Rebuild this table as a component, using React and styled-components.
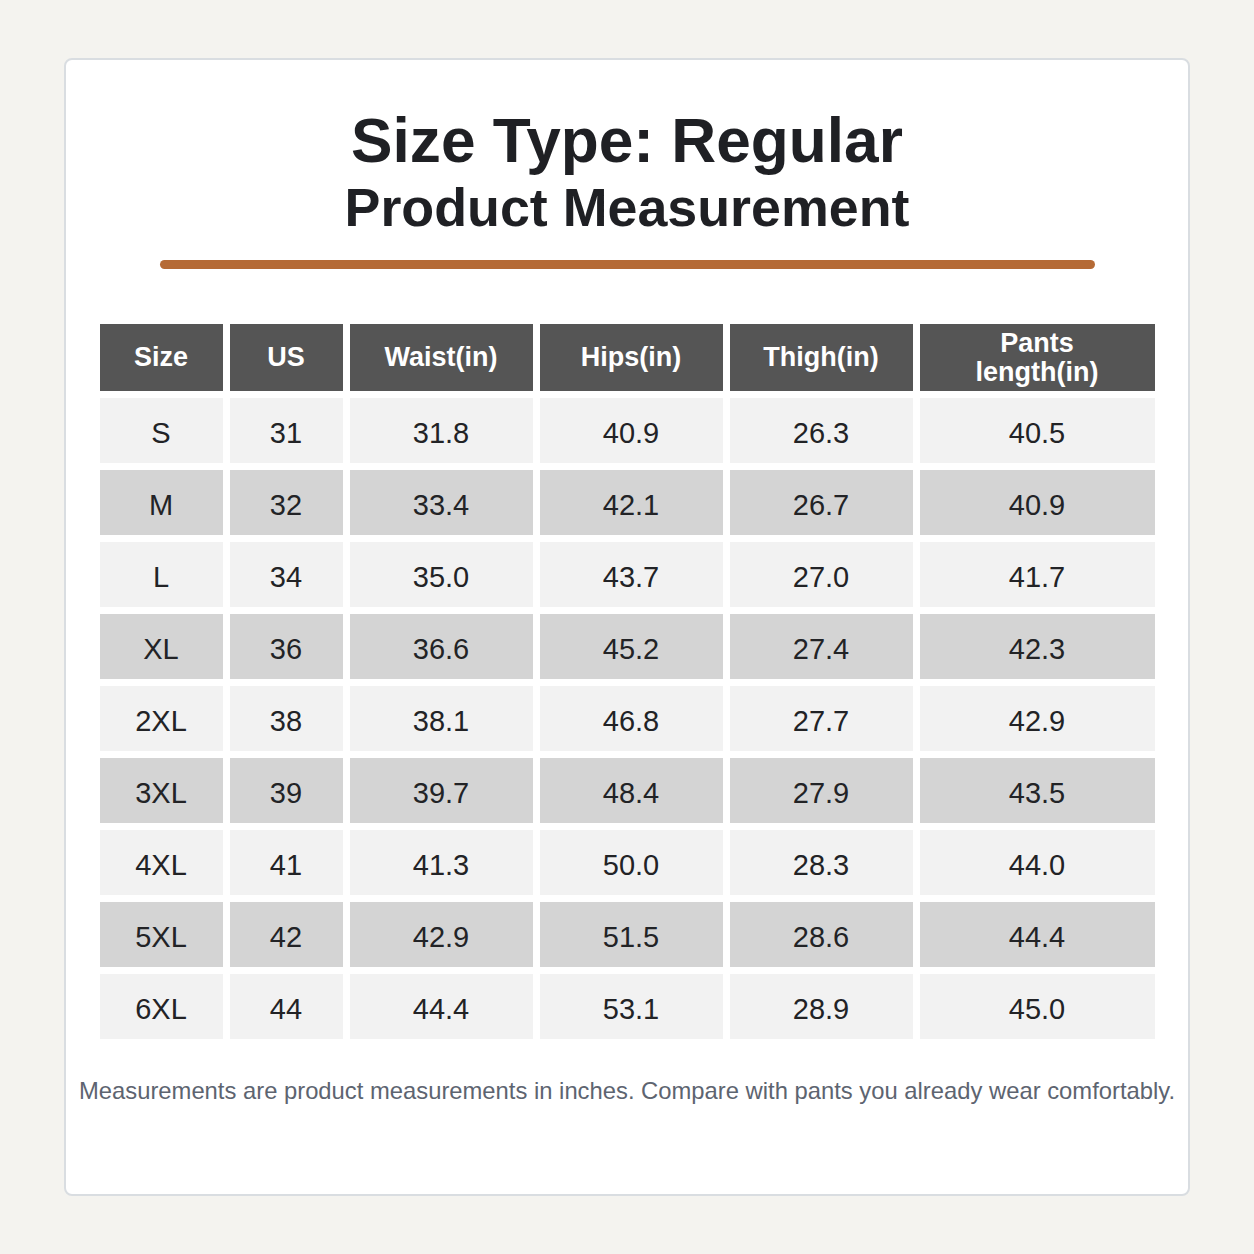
import React from 'react';
import styled, { createGlobalStyle } from 'styled-components';

const GlobalStyle = createGlobalStyle`
  html, body {
    margin: 0;
    padding: 0;
    background: #f4f3ef;
  }
  body {
    font-family: "Liberation Sans", Arial, sans-serif;
  }
`;

const columns = [
  { key: 'size', label: 'Size', width: 123 },
  { key: 'us', label: 'US', width: 113 },
  { key: 'waist', label: 'Waist(in)', width: 183 },
  { key: 'hips', label: 'Hips(in)', width: 183 },
  { key: 'thigh', label: 'Thigh(in)', width: 183 },
  { key: 'length', label: 'Pants length(in)', width: 235 },
];

const rows = [
  ['S', '31', '31.8', '40.9', '26.3', '40.5'],
  ['M', '32', '33.4', '42.1', '26.7', '40.9'],
  ['L', '34', '35.0', '43.7', '27.0', '41.7'],
  ['XL', '36', '36.6', '45.2', '27.4', '42.3'],
  ['2XL', '38', '38.1', '46.8', '27.7', '42.9'],
  ['3XL', '39', '39.7', '48.4', '27.9', '43.5'],
  ['4XL', '41', '41.3', '50.0', '28.3', '44.0'],
  ['5XL', '42', '42.9', '51.5', '28.6', '44.4'],
  ['6XL', '44', '44.4', '53.1', '28.9', '45.0'],
];

export default function App() {
  return (
    <Page>
      <GlobalStyle />
      <Card>
        <Title>
          <TitleLine>Size Type: Regular</TitleLine>
          <SubLine>Product Measurement</SubLine>
        </Title>
        <Divider />
        <Table>
          <colgroup>
            {columns.map(c => <col key={c.key} style={{ width: c.width }} />)}
          </colgroup>
          <thead>
            <tr>
              {columns.map(c => <HeadCell key={c.key}>{c.label}</HeadCell>)}
            </tr>
          </thead>
          <tbody>
            {rows.map((r, i) => (
              <tr key={r[0]}>
                {r.map((v, j) => <Cell key={j} shade={i % 2 === 1}>{v}</Cell>)}
              </tr>
            ))}
          </tbody>
        </Table>
        <Note>
          Measurements are product measurements in inches. Compare with pants you already wear comfortably.
        </Note>
      </Card>
    </Page>
  );
}

const Page = styled.div`
  padding: 58px 64px;
  display: flex;
  justify-content: center;
`;

const Card = styled.div`
  box-sizing: border-box;
  width: 1126px;
  height: 1138px;
  background: #ffffff;
  border: 2px solid #d9dde1;
  border-radius: 8px;
  padding: 47.5px 10px 0;
  display: flex;
  flex-direction: column;
  align-items: center;
`;

const Title = styled.h1`
  margin: 0;
  text-align: center;
  color: #1f2024;
  font-weight: 700;
`;

const TitleLine = styled.div`
  font-size: 62.2px;
  line-height: 66px;
`;

const SubLine = styled.div`
  font-size: 53.8px;
  line-height: 66px;
`;

const Divider = styled.div`
  width: 935px;
  height: 9px;
  margin-top: 20.5px;
  background: #b56a35;
  border-radius: 4.5px;
`;

const Table = styled.table`
  margin-top: 48px;
  border-collapse: separate;
  border-spacing: 7px;
  table-layout: fixed;
  width: 1069px;
`;

const HeadCell = styled.th`
  height: 67px;
  padding: 0 20px;
  box-sizing: border-box;
  background: #555555;
  color: #ffffff;
  font-size: 27px;
  font-weight: 700;
  line-height: 29px;
  text-align: center;
  vertical-align: middle;
`;

const Cell = styled.td`
  height: 65px;
  padding: 4px 8px 0;
  box-sizing: border-box;
  background: ${p => (p.shade ? '#d4d4d4' : '#f2f2f2')};
  color: #222326;
  font-size: 29px;
  line-height: 32px;
  text-align: center;
  vertical-align: middle;
`;

const Note = styled.p`
  margin: 27.5px 0 0;
  font-size: 23.8px;
  line-height: 33px;
  color: #5d6470;
  text-align: center;
  white-space: nowrap;
`;
